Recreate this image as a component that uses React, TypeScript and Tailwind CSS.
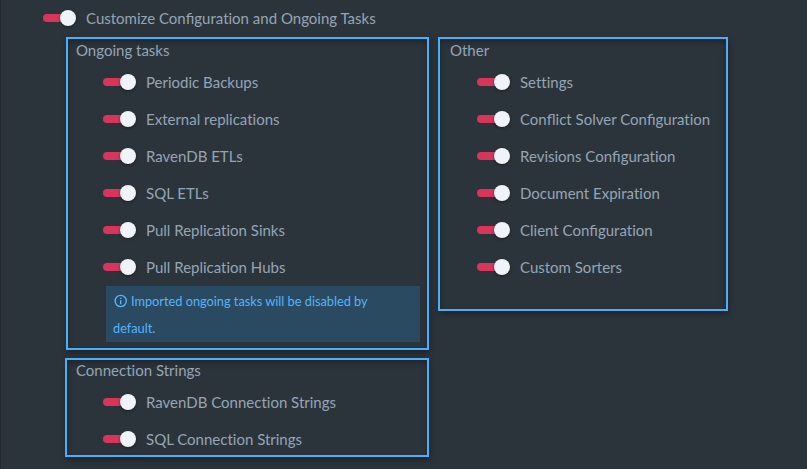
import type { ReactNode } from "react";

// Keeps the fi / fl ligatures while every other pair stays unjoined.
function Label({ text }: { text: string }) {
  return (
    <>
      {text.split(/(fi|fl)/).map((part, i) =>
        part === "fi" || part === "fl" ? (
          <span key={i} className="[font-variant-ligatures:common-ligatures]">
            {part}
          </span>
        ) : (
          part
        ),
      )}
    </>
  );
}

function Toggle({ label }: { label: string }) {
  return (
    <label className="flex h-[37px] items-center">
      <span className="flex h-4 w-[33px] items-center justify-end rounded-full">
        <span className="-mr-3 h-2 w-[29px] rounded-full bg-[#d9345a]" />
        <span className="relative size-4 shrink-0 rounded-full bg-[#f0f3f7] shadow-[0_1px_3px_rgba(0,0,0,0.45)]" />
      </span>
      <span className="ml-[10px] whitespace-nowrap pt-[2px]">
        <Label text={label} />
      </span>
    </label>
  );
}

function Group({ title, items, className, children }: { title: string; items: string[]; className: string; children?: ReactNode }) {
  return (
    <section
      className={
        "border-2 border-[#47b0fb] shadow-[1px_3px_6px_rgba(0,0,0,0.35),inset_0_3px_6px_rgba(0,0,0,0.3)] " + className
      }
    >
      <h2 className="h-6 leading-[22px]">{title}</h2>
      <div className="pl-[27px]">
        {items.map((item) => (
          <Toggle key={item} label={item} />
        ))}
        {children}
      </div>
    </section>
  );
}

export default function App() {
  return (
    <main className="h-[469px] w-[807px] overflow-hidden border-l border-[#222730] bg-[#2c343b] font-['Lato',sans-serif] text-[15px] text-[#94a5b5] [font-variant-ligatures:none]">
      <div className="-mt-px h-[38px] pl-[42px]">
        <Toggle label="Customize Configuration and Ongoing Tasks" />
      </div>
      <div className="flex items-start gap-[9px] pl-16">
        <div className="flex w-[364px] flex-col gap-2">
          <Group
            title="Ongoing tasks"
            className="ml-px h-[313px] pl-2"
            items={[
              "Periodic Backups",
              "External replications",
              "RavenDB ETLs",
              "SQL ETLs",
              "Pull Replication Sinks",
              "Pull Replication Hubs",
            ]}
          >
            <p className="ml-[3px] mt-px h-14 w-[314px] bg-[#2a4a62] pl-[7px] pt-[2px] text-[12.75px] leading-[27px] text-[#57b3fb]">
              <svg viewBox="0 0 14 14" className="mr-1 inline-block size-[14px] align-[-2px]" fill="none" stroke="currentColor" strokeWidth="1.4">
                <circle cx="7.7" cy="7" r="5.6" />
                <path d="M7.7 6.2v4M7.7 3.7v1.4" />
              </svg>
              Imported ongoing tasks will be disabled by
              <br />
              default.
            </p>
          </Group>
          <Group
            title="Connection Strings"
            className="h-[99px] pl-[9px] *:-mt-px *:mb-px *:last:mt-[-1px]"
            items={["RavenDB Connection Strings", "SQL Connection Strings"]}
          />
        </div>
        <Group
          title="Other"
          className="h-[274px] w-[290px] pl-[10px]"
          items={[
            "Settings",
            "Conflict Solver Configuration",
            "Revisions Configuration",
            "Document Expiration",
            "Client Configuration",
            "Custom Sorters",
          ]}
        />
      </div>
    </main>
  );
}
